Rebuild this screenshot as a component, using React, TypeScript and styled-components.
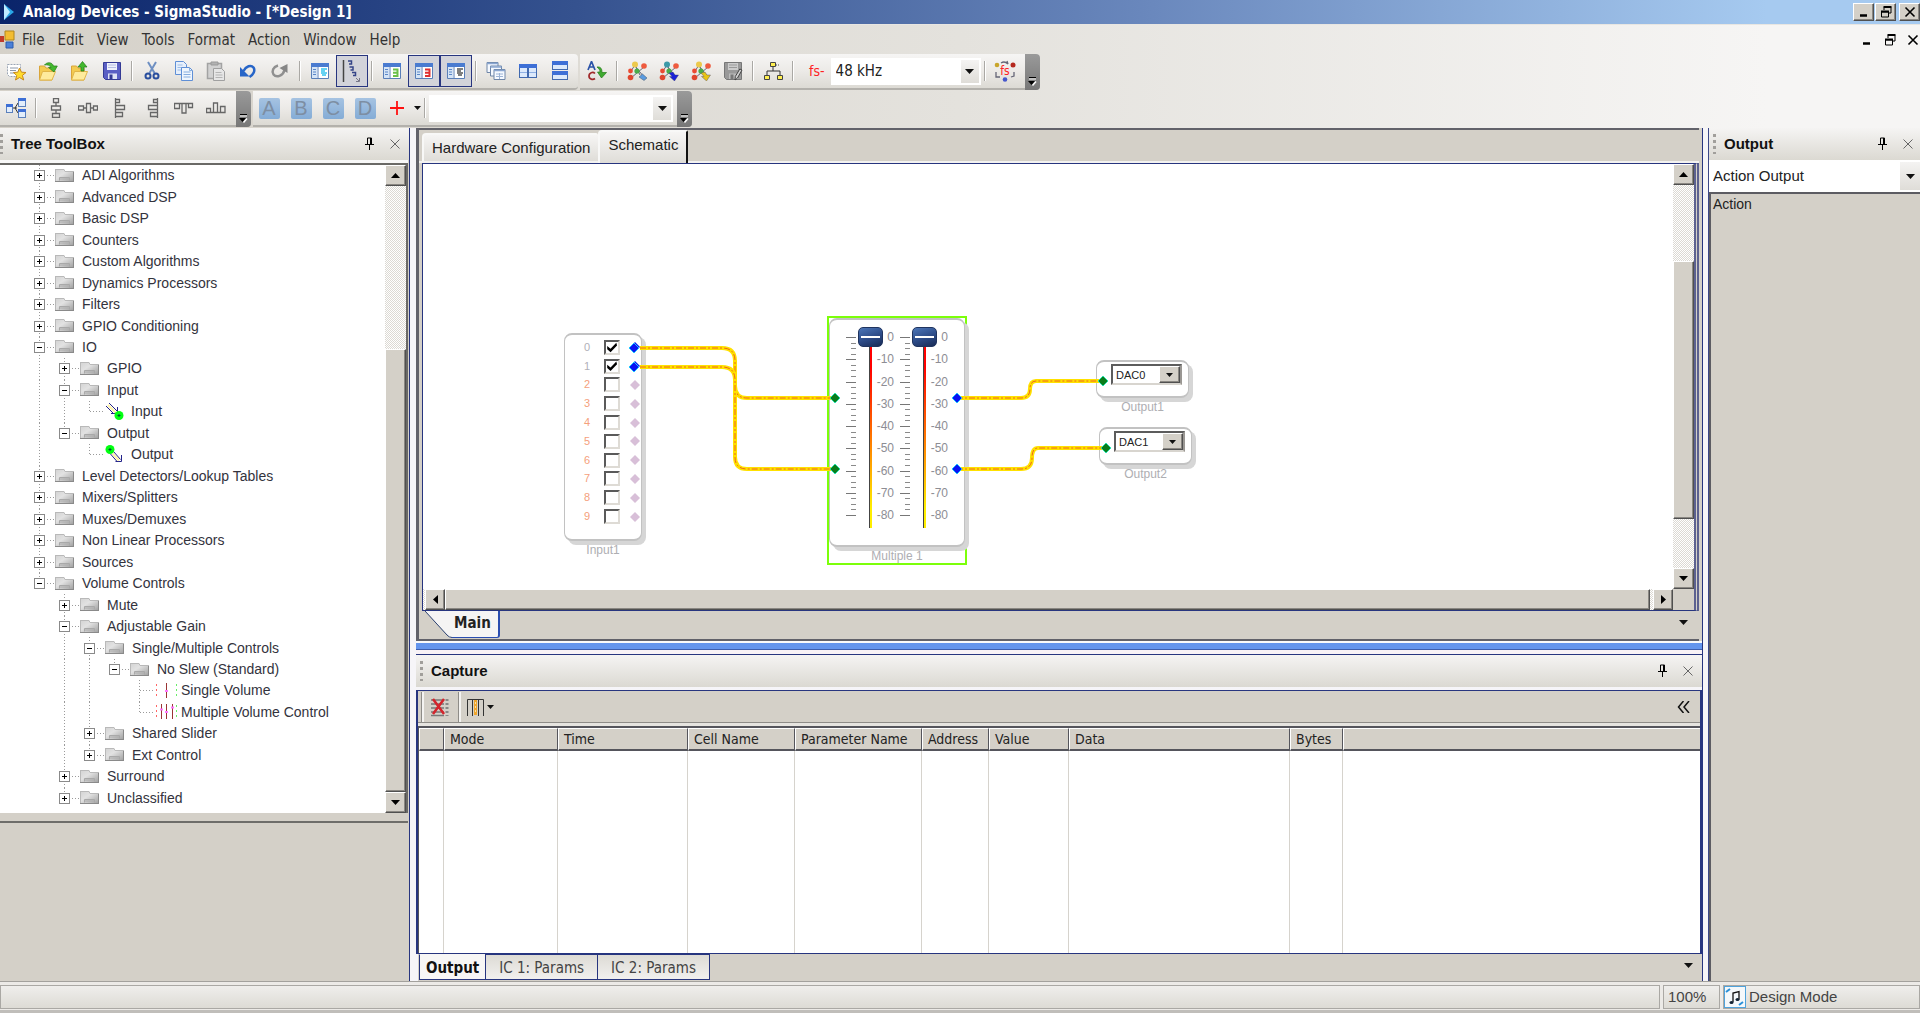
import React from "react";
import styled, { createGlobalStyle, css } from "styled-components";

const face = "#d4d0c8";
const navy = "#27357f";
const sans = '"Liberation Sans", Arial, sans-serif';
const tahoma = '"DejaVu Sans Condensed", "DejaVu Sans", Tahoma, sans-serif';

const GlobalStyle = createGlobalStyle`
  *, *::before, *::after { box-sizing: border-box; }
  body { margin: 0; background: ${face}; color: #222; font: 14px/20px ${sans}; overflow: hidden; }
  button, input, select { margin: 0; padding: 0; border: 0; border-radius: 0; background: none; color: inherit; font: inherit; }
  svg { display: block; flex: none; }
`;

const raised = css`
  background: ${face};
  border: 1px solid;
  border-color: #fff #505050 #505050 #fff;
  box-shadow: inset -1px -1px #8a8782;
`;
const strip = "linear-gradient(#f6f5f4, #eceae7 50%, #dcdad4)";

/* ---------- application frame ---------- */

const Window = styled.div`
  display: flex;
  flex-direction: column;
  height: 100vh;
  min-width: 1100px;
`;
const TitleBar = styled.header`
  display: flex;
  align-items: center;
  height: 24px;
  padding-left: 4px;
  background: linear-gradient(90deg, #0a246a, #35528f 30%, #6a88bd 60%, #a6caf0 92%);
`;
const AppName = styled.h1`
  flex: 1;
  margin: 0 0 0 9px;
  color: #fff;
  font: bold 15px/20px ${tahoma};
`;
const CaptionButtons = styled.div`
  display: flex;
`;
const CaptionButton = styled.button<{ $gap?: boolean }>`
  ${raised}
  display: grid;
  place-items: center;
  width: 21px;
  height: 18px;
  margin-left: ${(p) => (p.$gap ? 3 : 1)}px;
`;
const Chrome = styled.div`
  background: linear-gradient(90deg, #d5d1c9, #e4e2dd 50%, #f6f5f4 92%);
  border-top: 1px solid #e8e6e2;
`;
const MenuBar = styled.nav`
  display: flex;
  align-items: center;
  gap: 1px;
  height: 29px;
  font: 15px/20px ${tahoma};
`;
const MenuItem = styled.button`
  padding: 0 6px;
  color: #333;
`;
const MenuSpace = styled.div`
  flex: 1;
`;
const ChildButton = styled.button`
  display: grid;
  place-items: center;
  width: 22px;
  height: 20px;
  &:last-child {
    width: 14px;
    margin-left: 4px;
  }
`;
const ToolRow = styled.div`
  display: flex;
  gap: 2px;
  height: 37px;
  padding-bottom: 1px;
`;
const ToolStrip = styled.div<{ $open?: boolean; $pad?: number }>`
  display: flex;
  align-items: center;
  padding: 0 ${(p) => (p.$open ? 2 : 0)}px 0 ${(p) => p.$pad ?? 0}px;
  background: ${strip};
  border-bottom: 2px solid #b3b1ac;
  border-radius: 0 4px 4px 0;
`;
const ToolButton = styled.button<{ $on?: boolean }>`
  display: grid;
  place-items: center;
  width: 32px;
  height: 32px;
  border: 1px solid ${(p) => (p.$on ? navy : "transparent")};
  background: ${(p) => (p.$on ? "#d2d3da" : "transparent")};
`;
const Sep = styled.div`
  width: 8px;
  height: 20px;
  background: linear-gradient(90deg, transparent 3px, #aaa8a4 3px, #aaa8a4 4px, #fff 4px, #fff 5px, transparent 5px);
`;
const Overflow = styled.button`
  display: grid;
  place-items: end center;
  align-self: stretch;
  width: 15px;
  margin: 0 0 -2px 4px;
  padding-bottom: 4px;
  background: linear-gradient(#9a9a9a, #777);
  border-radius: 0 4px 4px 0;
`;
const Letter = styled.span`
  display: grid;
  place-items: center;
  width: 21px;
  height: 21px;
  border-radius: 2px;
  background: linear-gradient(#a6c3e2, #84acd6);
  color: #7d8ea3;
  font: 20px/21px ${sans};
`;
const RateLabel = styled.label`
  padding: 0 6px 0 12px;
  color: #f22;
  font: 14px/20px ${tahoma};
`;
const Combo = styled.span<{ $w?: number; $h: number }>`
  display: grid;
  grid-template-columns: 1fr 20px;
  align-items: center;
  width: ${(p) => (p.$w ? p.$w + "px" : "auto")};
  height: ${(p) => p.$h}px;
  background: #fff;
  > select {
    grid-area: 1 / 1 / 2 / 3;
    width: 100%;
    height: 100%;
    padding-left: 5px;
    appearance: none;
    outline: 0;
  }
  > i {
    grid-area: 1 / 2;
    display: grid;
    place-items: center;
    height: calc(100% - 4px);
    margin-right: 2px;
    background: linear-gradient(#f4f3f2, #dfddd8);
    pointer-events: none;
  }
`;
const RateCombo = styled(Combo)`
  font: 15px/20px ${tahoma};
`;

/* ---------- work area ---------- */

const Workspace = styled.main`
  flex: 1;
  display: grid;
  grid-template-columns: 409px 7px minmax(0, 1fr) 6px 212px;
  min-height: 0;
`;
const Gutter = styled.div`
  background: #f6f5f8;
  border-left: 1px solid ${navy};
`;
const Panel = styled.section`
  display: flex;
  flex-direction: column;
  min-width: 0;
  min-height: 0;
`;
const PanelHead = styled.header<{ $left?: number; $right?: number }>`
  display: flex;
  align-items: center;
  flex: none;
  height: 32px;
  padding: 0 ${(p) => p.$right ?? 2}px 1px ${(p) => p.$left ?? 4}px;
  background: linear-gradient(#f5f4f3, #dbd9d2);
`;
const Grip = styled.span`
  width: 3px;
  height: 20px;
  margin-right: 8px;
  background: repeating-linear-gradient(#a19f9b 0 3px, transparent 3px 6px);
`;
const PanelTitle = styled.h2`
  flex: 1;
  margin: 0;
  color: #111;
  font: bold 15px/20px ${sans};
`;
const HeadButton = styled.button`
  display: grid;
  place-items: center;
  width: 25px;
  height: 20px;
`;

/* ---------- tree ---------- */

const TreeBox = styled.div`
  flex: 1;
  display: flex;
  min-height: 0;
  margin-right: 1px;
  border-top: 3px solid #f8f8f8;
  background: #fff;
`;
const TreeInner = styled.div`
  flex: 1;
  display: flex;
  border: solid #6a6966;
  border-width: 2px 2px 0 0;
`;
const TreeList = styled.ul`
  flex: 1;
  display: flex;
  flex-direction: column;
  margin: 0;
  padding: 0 0 4px 27px;
  list-style: none;
`;
const TreeRow = styled.li`
  flex: 1;
  display: flex;
  align-items: stretch;
  min-height: 0;
  color: #33333d;
  white-space: nowrap;
`;
const vDots = "repeating-linear-gradient(#9a9a9a 0 1px, transparent 1px 3px)";
const hDots = "repeating-linear-gradient(90deg, #9a9a9a 0 1px, transparent 1px 3px)";
const Guide = styled.span<{ $line: "full" | "half" | "none" }>`
  width: 25px;
  background: ${(p) => (p.$line === "none" ? "none" : vDots)} 12px 0 / 1px ${(p) => (p.$line === "half" ? "50%" : "100%")} no-repeat;
`;
const Joint = styled(Guide)`
  display: grid;
  place-items: center;
`;
const Expander = styled.button`
  width: 11px;
  height: 11px;
  background: #fff;
  border: 1px solid #8a8a8a;
`;
const Stub = styled.span<{ $leaf?: boolean }>`
  align-self: center;
  width: ${(p) => (p.$leaf ? 14 : 7)}px;
  height: 1px;
  margin-left: ${(p) => (p.$leaf ? -12 : -5)}px;
  background: ${hDots};
`;
const NodeIcon = styled.span<{ $leaf?: boolean }>`
  display: grid;
  place-items: center start;
  width: ${(p) => (p.$leaf ? 23 : 19)}px;
  margin: 0 ${(p) => (p.$leaf ? 3 : 8)}px 1px 1px;
`;
const NodeName = styled.span`
  align-self: center;
  padding-bottom: 1px;
`;
const TreeFoot = styled.div`
  height: 160px;
  margin-top: 8px;
  margin-right: 1px;
  border-top: 2px solid #6e6d6a;
`;

/* ---------- scroll bars ---------- */

const Bar = styled.div<{ $h?: boolean }>`
  display: flex;
  flex-direction: ${(p) => (p.$h ? "row" : "column")};
  flex: none;
  ${(p) => (p.$h ? "height" : "width")}: 21px;
  padding-left: ${(p) => (p.$h ? 2 : 0)}px;
  background: repeating-conic-gradient(#fff 0 25%, #dcd9d3 0 50%) 0 0 / 2px 2px;
`;
const BarButton = styled.button`
  ${raised}
  display: grid;
  place-items: center;
  flex: none;
  min-width: 20px;
  height: 21px;
`;
const Gap = styled.div<{ $n: number }>`
  flex: ${(p) => p.$n};
`;
const Thumb = styled.div<{ $n: number }>`
  ${raised}
  flex: ${(p) => p.$n};
`;

/* ---------- editor ---------- */

const Editor = styled(Panel)`
  flex: 1;
  margin-right: 3px;
  background: ${face};
  border: solid #62626a;
  border-width: 2px 0 2px 3px;
`;
const TabStrip = styled.div`
  display: flex;
  align-items: flex-end;
  height: 33px;
  padding-left: 3px;
  border-bottom: 2px solid #f3f2f0;
`;
const Tab = styled.button<{ $on?: boolean }>`
  height: ${(p) => (p.$on ? 33 : 28)}px;
  margin-bottom: ${(p) => (p.$on ? -2 : 0)}px;
  padding: 0 8px ${(p) => (p.$on ? 6 : 0)}px 8px;
  background: linear-gradient(#f6f5f4, #dfddd8);
  border: solid #f8f8f7;
  border-width: 2px 0 0 2px;
  border-right: ${(p) => (p.$on ? "2px solid #111" : "0")};
  border-radius: 4px 2px 0 0;
  font: 15px/20px ${sans};
`;
const View = styled.div`
  flex: 1;
  display: grid;
  grid-template: minmax(0, 1fr) 21px / minmax(0, 1fr) 21px;
  min-height: 0;
  margin-left: 3px;
  border: 1px solid ${navy};
  border-right: 5px double #5c6190;
  background: ${face};
`;
const Canvas = styled.div`
  position: relative;
  overflow: hidden;
  background: #fff;
`;
const SheetStrip = styled.div`
  display: flex;
  align-items: flex-start;
  justify-content: space-between;
  height: 28px;
  padding: 0 8px 0 6px;
`;
const SheetTab = styled.button`
  display: flex;
  height: 27px;
  font: bold 15px/24px ${tahoma};
  > span {
    padding: 0 7px 0 2px;
    background: #f5f4f4;
    border: solid #2a4db0;
    border-width: 0 2px 1px 0;
    border-radius: 0 0 3px 0;
  }
`;
const MoreButton = styled.button<{ $slim?: boolean }>`
  display: grid;
  place-items: center;
  width: ${(p) => (p.$slim ? 8 : 15)}px;
  height: 22px;
`;
const Splitter = styled.div`
  flex: none;
  height: 14px;
  background: linear-gradient(#fafafa 0 2px, #6495ed 2px 8px, #3f5fae 8px 9px, #f8f2f6 9px 13px, ${navy} 13px);
`;

/* ---------- schematic blocks ---------- */

const Block = styled.div<{ $x: number; $y: number; $w: number }>`
  position: absolute;
  left: ${(p) => p.$x}px;
  top: ${(p) => p.$y}px;
  width: ${(p) => p.$w}px;
`;
const Body = styled.div<{ $h: number }>`
  display: flex;
  height: ${(p) => p.$h}px;
  background: #fff;
  border: 1px solid #c2c2c2;
  border-width: 2px 1px;
  border-radius: 8px;
  box-shadow: 4px 4px 0 #d6d6d6;
`;
const Caption = styled.div`
  margin-top: 2px;
  color: #aeaeb2;
  font: 12px/15px ${sans};
  text-align: center;
`;
const Selected = styled(Block)`
  height: 249px;
  border: 2px solid #7cff0a;
`;
const Channels = styled.div`
  display: flex;
  flex-direction: column;
  flex: 1;
  height: 188px;
  margin-top: 3px;
`;
const Channel = styled.label<{ $on: boolean }>`
  flex: 1;
  display: grid;
  grid-template-columns: 10px 16px 10px;
  column-gap: 10px;
  align-items: center;
  padding-left: 19px;
  color: ${(p) => (p.$on ? "#b0b0b8" : "#f5a07c")};
  font: 11px/15px ${sans};
`;
const Check = styled.input`
  appearance: none;
  width: 16px;
  height: 15px;
  background: #fff;
  border: 2px solid;
  border-color: #5a5a5a #dedbd5 #dedbd5 #5a5a5a;
  &:checked::before {
    content: "";
    display: block;
    width: 12px;
    height: 11px;
    background: #000;
    clip-path: polygon(10% 38%, 38% 62%, 86% 8%, 92% 32%, 38% 94%, 10% 66%);
  }
`;
const Faders = styled.div`
  display: flex;
  gap: 6px;
  padding: 7px 0 0 16px;
`;
const Fader = styled.div`
  display: grid;
  grid-template-columns: 10px 29px 9px;
  align-items: start;
`;
const Slide = styled.input`
  appearance: none;
  writing-mode: vertical-lr;
  direction: rtl;
  width: 25px;
  height: 201px;
  margin: 0 2px;
  outline: 0;
  &::-webkit-slider-runnable-track {
    width: 3px;
    height: 100%;
    background: linear-gradient(90deg, #444 1px, transparent 1px), linear-gradient(#f00 20%, #f60 50%, #fe0 90%);
  }
  &::-webkit-slider-thumb {
    appearance: none;
    width: 25px;
    height: 20px;
    margin-left: -11px;
    border-radius: 5px;
    border: 1px solid #20345f;
    background: linear-gradient(#fff, #fff) center / 19px 2px no-repeat, linear-gradient(160deg, #4c76b8, #2c4a86 55%, #182b55);
  }
`;
const Marks = styled.ol`
  display: flex;
  flex-direction: column;
  align-items: flex-end;
  justify-content: space-between;
  height: 194px;
  margin: 2px 0 0;
  padding: 0;
  list-style: none;
  color: #8d8d94;
  font: 12px/16px ${sans};
`;
const Scale = styled.svg`
  margin-top: 10px;
`;
const OutBody = styled(Body)`
  padding: 2px 0 0 14px;
`;
const DacCombo = styled(Combo)`
  grid-template-columns: 1fr 21px;
  border: 2px solid;
  border-color: #5c5c5c #9a9793 #d8d5cf #5c5c5c;
  font: 11px/14px ${sans};
  > select { padding-left: 3px; color: #222; }
  > i { ${raised} height: 100%; margin-right: 0; }
`;
const Overlay = styled.svg`
  position: absolute;
  left: 0;
  top: 0;
  pointer-events: none;
`;

/* ---------- capture ---------- */

const Capture = styled(Panel)`
  flex: none;
  height: 326px;
`;
const CaptureBody = styled.div`
  flex: 1;
  display: flex;
  flex-direction: column;
  min-height: 0;
  border: solid ${navy};
  border-width: 1px 2px;
`;
const HeadRule = styled.div`
  height: 3px;
  background: #f6f5f8;
`;
const CaptureTools = styled.div`
  display: flex;
  align-items: center;
  height: 35px;
  padding: 0 4px;
  border: solid;
  border-width: 0 0 3px;
  border-color: #e6e4e0;
  box-shadow: inset 0 -1px #8e8c88;
`;
const CaptureButton = styled.button`
  display: flex;
  align-items: center;
  gap: 2px;
  height: 30px;
  padding: 0 6px;
  border: solid;
  border-width: 0 0 0 2px;
  border-color: #f4f3f1;
  box-shadow: -1px 0 #8e8c88;
  margin-right: 3px;
`;
const Grid = styled.table`
  flex: 1;
  width: 100%;
  border: solid #55555c;
  border-width: 2px 0 0 1px;
  border-collapse: separate;
  border-spacing: 0;
  table-layout: fixed;
  background: #fff;
  font: 14px/19px ${tahoma};
  th {
    height: 23px;
    padding: 0 0 0 5px;
    background: ${face};
    border: solid;
    border-width: 1px 1px 2px 1px;
    border-color: #fff #55555c #55555c #fff;
    font-weight: normal;
    text-align: left;
    white-space: nowrap;
  }
  td { border-right: 1px solid #d6d3cd; }
  th:last-child, td:last-child { border-right: 0; }
`;
const BottomTabs = styled.div`
  display: flex;
  align-items: flex-start;
  height: 27px;
  padding: 0 6px 0 3px;
  box-shadow: inset 2px 0 #f6f5f8;
`;
const BottomTab = styled.button<{ $on?: boolean }>`
  height: 26px;
  margin-right: -1px;
  padding: 1px ${(p) => (p.$on ? 6 : 13)}px 0;
  background: ${(p) => (p.$on ? "#f7f6f5" : "linear-gradient(#dddbd5, #f1f0ee)")};
  border: 1px solid ${navy};
  border-top-color: ${(p) => (p.$on ? "#f7f6f5" : navy)};
  color: ${(p) => (p.$on ? "#111" : "#444")};
  font: ${(p) => (p.$on ? "bold " : "")}15px/20px ${tahoma};
`;

/* ---------- output and status ---------- */

const OutputPanel = styled(Panel)`
  border-left: 1px solid #3c4889;
`;
const OutputCombo = styled(Combo)`
  flex: none;
  font: 15px/20px ${sans};
  > select { padding-left: 4px; }
  > i { margin-right: 0; }
`;
const OutputList = styled.div`
  flex: 1;
  padding: 0 2px;
  border: solid #5c5c62;
  border-width: 2px 0 0 2px;
`;
const StatusBar = styled.footer`
  display: flex;
  flex: none;
  gap: 3px;
  height: 32px;
  padding: 3px 0 4px;
  background: #eceae7;
  border: solid #a3a19d;
  border-width: 1px 0 0;
  box-shadow: inset 0 -3px #c0beba;
  font: 15px/20px ${sans};
`;
const Pane = styled.div<{ $w?: number }>`
  display: flex;
  align-items: center;
  gap: 3px;
  flex: ${(p) => (p.$w ? "none" : 1)};
  width: ${(p) => (p.$w ? p.$w + "px" : "auto")};
  padding-left: 4px;
  background: linear-gradient(#efeeec, #dddbd5);
  border: 1px solid #aaa8a4;
  color: #444;
`;
const ModeIcon = styled.span`
  margin-left: -4px;
  background: #f4f8fb;
  border: 1px solid #4fa3dc;
`;

/* ---------- icons ---------- */

const Ico = ({ children, w = 20, h = 20 }: { children: React.ReactNode; w?: number; h?: number }) => (
  <svg width={w} height={h} viewBox={`0 0 ${w} ${h}`} fill="none" aria-hidden="true">
    {children}
  </svg>
);
const Down = ({ c = "#111" }: { c?: string }) => (
  <Ico w={9} h={5}><path d="M0 0h9L4.500 5z" fill={c} /></Ico>
);
const Small = () => <Ico w={7} h={4}><path d="M0 0h7L3.500 4z" fill="#111" /></Ico>;
const Arrow = ({ dir }: { dir: "up" | "down" | "left" | "right" }) => (
  <Ico w={9} h={9}>
    <path
      fill="#000"
      d={{ up: "M0 7h9L4.500 2z", down: "M0 2h9L4.500 7z", left: "M7 0v9L2 4.500z", right: "M2 0v9l5-4.500z" }[dir]}
    />
  </Ico>
);
const Minimize = () => <Ico w={14} h={14}><path d="M3 10.500h7" stroke="#000" strokeWidth="2.500" /></Ico>;
const Restore = () => (
  <Ico w={14} h={14}>
    <path d="M5 5V2.500h7V8h-2" stroke="#000" /><path d="M4.500 2h8" stroke="#000" strokeWidth="2" />
    <path d="M2.500 7v5h7V7z" stroke="#000" /><path d="M2 6.500h8" stroke="#000" strokeWidth="2" />
  </Ico>
);
const Cross = ({ thin }: { thin?: boolean }) => (
  <Ico w={12} h={12}><path d="M1.500 1.500l9 9M10.500 1.500l-9 9" stroke={thin ? "#666" : "#000"} strokeWidth={thin ? 1 : 1.6} /></Ico>
);
const Pin = () => (
  <Ico w={11} h={13}>
    <path d="M3.500 1h4v6.500h-4zM1 7.500h9M5.500 8v5" stroke="#000" /><path d="M7 1v6" stroke="#000" strokeWidth="2" />
  </Ico>
);
const OverflowMark = () => (
  <Ico w={9} h={10}>
    <path d="M1 1.500h7" stroke="#000" /><path d="M1 3h7" stroke="#fff" />
    <path d="M0 5h7L3.500 9z" fill="#000" /><path d="M8 5.500L4.500 9.500" stroke="#fff" strokeWidth="1.500" />
  </Ico>
);
const Folder = () => (
  <Ico w={19} h={15}>
    <defs>
      <linearGradient id="fold" x1="0" y1="0" x2="1" y2="1">
        <stop offset="0" stopColor="#d2d2d2" /><stop offset=".4" stopColor="#e2e2e2" /><stop offset="1" stopColor="#9c9c9c" />
      </linearGradient>
    </defs>
    <path d="M0 1h9l1 2h9v11H0z" fill="url(#fold)" />
    <path d="M0 1.500h9l1 2h9M.500 1v13" stroke="#b9b9b9" /><path d="M0 13.500h19M18.500 4v10" stroke="#8a8a8a" />
    <path d="M4.500 12.500v-3h10v3M5 11h9" stroke="#a9a9a9" />
  </Ico>
);
const Pencil = ({ out }: { out?: boolean }) => (
  <Ico w={19} h={18}>
    {out ? (
      <>
        <path d="M8.500 6.500l7 8M5.500 9l7 8M10.500 16.500h6V10" stroke="#23238a" /><path d="M7.500 8.500l6.500 7" stroke="#fff3a8" strokeWidth="2" />
        <circle cx="5" cy="4.500" r="4.500" fill="#0f1" /><path d="M5 3v3M3.500 4.500h3" stroke="#053" />
      </>
    ) : (
      <>
        <path d="M4 1l8 8M1 4l8 8M6 11.500h6.500V5" stroke="#23238a" /><path d="M3 3l8 8" stroke="#fff3a8" strokeWidth="2" />
        <circle cx="14" cy="13.500" r="4.500" fill="#0f1" /><path d="M14 12v3M12.500 13.500h3" stroke="#053" />
      </>
    )}
  </Ico>
);
const Volume = ({ multi }: { multi?: boolean }) => (
  <Ico w={23} h={17}>
    <path d="M1.500 2v14" stroke="#f66" strokeDasharray="2 3" /><path d="M21.500 2v14" stroke="#6e6" strokeDasharray="2 3" />
    <path d={multi ? "M6.500 1v15M11.500 1v15M17.500 1v15" : "M11.500 1v15"} stroke="#9a3434" />
    {multi && <path d="M5 6.500h3M16 4.500h3" stroke="#f7f" strokeWidth="2" />}
    <path d="M10 9h3" stroke="#f7f" strokeWidth="2" />
  </Ico>
);
const NewIcon = () => (
  <Ico>
    <path d="M1.500 3.500h13v12h-11l-2-2z" fill="#fff" stroke="#9ba5b5" strokeDasharray="2 1" />
    <path d="M4 7h8M4 9.500h6M4 12h4" stroke="#8c97aa" />
    <path d="M13.500 7l2 4.200 4.500.3-3.600 2.900 1.300 4.600-4.200-2.500L9.500 19l1.200-4.500L7.500 11.500l4.300-.3z" fill="#ffdb2e" stroke="#c9881a" />
  </Ico>
);
const OpenIcon = ({ up }: { up?: boolean }) => (
  <Ico>
    <path d="M1.500 5h5l1.500 2h6v12H1.500z" fill="#f3cb50" stroke="#d9a53a" />
    <path d="M4.500 10.500h13L14 19H1.500z" fill="#feeb9c" stroke="#e0b548" />
    {up ? <path d="M11 10V6H8l4.500-5.500L17 6h-3v4z" fill="#43b82e" stroke="#227a18" strokeWidth=".7" />
      : <path d="M6.500 4C9 .8 14 .8 15.500 5h3.800l-3.300 6-5.500-4.500h2.500C12 4 9 3.500 6.500 4z" fill="#43b82e" stroke="#227a18" strokeWidth=".7" />}
  </Ico>
);
const SaveIcon = ({ pen }: { pen?: boolean }) => {
  const a = pen ? "#999" : "#5a5fc4";
  const b = pen ? "#777" : "#343a94";
  return (
    <Ico>
      <path d="M1.500 1.500h17v17h-15l-2-2z" fill={a} stroke={b} />
      <path d="M5 2h10v7H5z" fill={pen ? "#ccc" : "#eef1fb"} /><path d="M6 4h8M6 6.500h8" stroke={pen ? "#999" : "#b5bde4"} />
      <path d="M6 12.500h9V18H6z" fill={pen ? "#bbb" : "#dfe3f5"} /><path d="M7.500 13.500h3V18h-3z" fill={b} />
      {pen && <path d="M19 9l-4.500 8-2.500 2 .3-3.500 4.500-7.500z" fill="#d0d0d0" stroke="#444" />}
    </Ico>
  );
};
const CutIcon = () => (
  <Ico>
    <path d="M6 1l6.500 11M14 1L7.500 12" stroke="#6e8fc2" strokeWidth="2" />
    <circle cx="6" cy="15" r="2.500" stroke="#2a4f9e" strokeWidth="2" /><circle cx="14" cy="15" r="2.500" stroke="#2a4f9e" strokeWidth="2" />
  </Ico>
);
const CopyIcon = () => (
  <Ico>
    <path d="M1.500.500h8l3 3v10h-11z" fill="#e6effb" stroke="#5f8fd6" /><path d="M3.500 4h5M3.500 6.500h5M3.500 9h5" stroke="#9dbde8" />
    <path d="M7.500 6.500h8l3 3v10h-11z" fill="#eef5fd" stroke="#5f8fd6" /><path d="M15.500 6.500v3h3M9.500 11h7M9.500 13.500h7M9.500 16h7" stroke="#86addf" />
  </Ico>
);
const PasteIcon = () => (
  <Ico>
    <path d="M1.500 2.500h14v15h-14z" fill="#d2d2d2" stroke="#a3a3a3" strokeWidth="1.500" /><path d="M5 1h7v3H5z" fill="#b2b2b2" stroke="#999" />
    <path d="M7.500 7.500h8l3 3v9h-11z" fill="#e6e6e6" stroke="#a0a0a0" /><path d="M9.500 11.500h6M9.500 14h7M9.500 16.500h7" stroke="#b4b4b4" />
  </Ico>
);
const UndoIcon = () => (
  <Ico>
    <path d="M5.500 10C8 5 13 3.500 15.500 6.500c2 3 0 7-4 9.500" stroke="#2765c8" strokeWidth="2.500" /><path d="M2 6v9.500h9.500z" fill="#2765c8" />
  </Ico>
);
const RedoIcon = () => (
  <Ico>
    <path d="M8 4.500C3 6 1.500 10 3.500 13.500c3 3.500 9.500 1.500 11-4.500" stroke="#909090" strokeWidth="2.500" /><path d="M17.500 3v9L9.500 7z" fill="#868686" />
  </Ico>
);
const PaneIcon = ({ c, k = 0 }: { c: string; k?: number }) => (
  <Ico>
    <path d="M1.500 2.500h17v15h-17z" fill="#fff" stroke="#5a7fb8" /><path d="M1 2h18v4H1z" fill="#4a7bd0" />
    <path d="M2 6h5v11H2z" fill="#d5e4f6" /><path d="M3 8.500h3M3 11h3M3 13.500h3" stroke="#5a86c8" />
    <path d="M8 6v12" stroke="#5a7fb8" />
    {k === 0 ? <path d="M11 8h6M11 10h4M11 12h6M12 14h4" stroke={c} strokeWidth="1.500" />
      : <path d="M11 8.500h4.500v6.500H11M11 11.800h4.500" stroke={c} strokeWidth="2" />}
  </Ico>
);
const TreeIcon = () => (
  <Ico w={22} h={24}>
    <path d="M2.500 1v22" stroke="#444" strokeWidth="1.500" />
    <path d="M7 2h3.500v3H8M8.500 8H12v3H9.500M11 13.500h3.500v3H12" stroke="#344488" strokeWidth="1.500" /><path d="M15 19l3 3M18.500 19v3.500H15" stroke="#778" />
  </Ico>
);
const CascadeIcon = () => (
  <Ico>
    {[0, 3.5, 7].map((d) => (
      <g key={d}>
        <path d={`M${1 + d} ${1.5 + d}h11v10h-11z`} fill="#f5f9ff" stroke="#6f86a8" /><path d={`M${1 + d} ${2.5 + d}h11`} stroke="#8aa6d0" strokeWidth="1.500" />
      </g>
    ))}
    <path d="M10 13h7M10 15.500h7M13.500 12v6" stroke="#9db4d6" />
  </Ico>
);
const TileIcon = ({ rows }: { rows?: boolean }) => (
  <Ico>
    {(rows ? [[2, 0, 16, 9], [2, 10, 16, 9]] : [[1, 3, 9, 14], [10, 3, 9, 14]]).map(([x, y, w, h]) => (
      <g key={x + y}>
        <rect x={x + 0.5} y={y + 0.5} width={w - 1} height={h - 1} fill="#dce9fb" stroke="#4169ae" /><rect x={x} y={y} width={w} height="4" fill="#3d6fd6" />
        {!rows && <path d={`M${x + 1} ${y + 8.5}h${w - 2}`} stroke="#8fb0e4" />}
      </g>
    ))}
  </Ico>
);
const CheckIcon = () => (
  <Ico>
    <path d="M1 9L4.500.500 8 9M2.500 6h4" stroke="#2a52a8" strokeWidth="1.700" /><path d="M8 12.500c-2-2-6-1-6 2.500s4 4 6 2.500" stroke="#a0282a" strokeWidth="1.700" />
    <path d="M10 6c4-.5 5 2 5 5.500h4.500l-5 5.500-4-6h2.500c0-2-1-3.500-3-5z" fill="#3faa30" stroke="#227a18" strokeWidth=".7" />
  </Ico>
);
const LinkIcon = ({ top, tip, k }: { top: string; tip: string; k?: boolean }) => (
  <Ico>
    <path d="M8 4L4 10M8 4l5 10M17 6L4 17M8 5l9 11" stroke="#667" />
    <circle cx="8" cy="3.500" r="3" fill={top} /><circle cx="17" cy="5" r="2.800" fill="#ee5a3e" /><circle cx="3.500" cy="10" r="2.400" fill="#ea4b32" />
    <circle cx="10" cy="10" r="2.600" fill="#49ad49" /><circle cx="3.500" cy="16.500" r="2.800" fill="#e0462e" />
    {k ? <path d="M10 12l4-1 2 3h3.500l-4 6-5-4.500h2.500z" fill={tip} stroke="#446" strokeWidth=".4" /> : <path d="M12 16l5 3.500 3-2.500-4.500-4z" fill={tip} stroke="#456" strokeWidth=".5" />}
  </Ico>
);
const NetIcon = () => (
  <Ico>
    <path d="M10 6v4M4 14v-4h13v4" stroke="#333" /><path d="M7.500 1.500h5v4h-5zM1.500 14.500h5v4h-5zM14.500 14.500h5v4h-5z" fill="#ffef50" stroke="#444" />
    <path d="M13 4h4" stroke="#555" strokeDasharray="1 1" />
  </Ico>
);
const SyncIcon = () => (
  <Ico w={22} h={22}>
    <circle cx="3" cy="5" r="2.300" fill="#c9a62c" /><circle cx="19" cy="5" r="2.500" fill="#b5281e" /><circle cx="11" cy="19.500" r="2.300" fill="#4657cc" />
    <path d="M7 3c3-2 5-1 7 1l-1-3M2 12v5h4M20 12v4l-3 1" stroke="#667" strokeWidth="1.300" />
    <text x="11" y="15" fill="#f22" fontSize="12" textAnchor="middle" fontFamily="DejaVu Sans Condensed">fs</text>
  </Ico>
);
const LinksIcon = () => (
  <Ico>
    <path d="M7 10h4M12 5l-3 5 3 5" stroke="#333" />
    {[[0, 6, 7], [12, 0, 8], [12, 11, 8]].map(([x, y, w]) => (
      <g key={y}><rect x={x + 0.5} y={y + 0.5} width={w - 1} height="8" fill="#e2edfb" stroke="#5b80bc" /><rect x={x} y={y} width={w} height="3" fill="#3d6fd6" /></g>
    ))}
  </Ico>
);
const alignPaths = [
  "M7.500.500h5v4h-5zM5.500 8h9v4h-9zM6.500 15.500h7v4h-7zM10 4.500V8M10 12v3.500",
  "M.500 8h5v4h-5zM8.500 5.500h4v9h-4zM15.500 8h4v4h-4zM5.500 10h3M12.500 10h3",
  "M5.500 0v20M5.500 1.500h4v3h-4zM5.500 7.500h9v4h-9zM5.500 14.500h7v4h-7z",
  "M15.500 0v20M11.500 1.500h4v3h-4zM6.500 7.500h9v4h-9zM8.500 14.500h7v4h-7z",
  "M.500 5.500h5v5h-5zM5.500 5.500h9M8 5.500h4v9.500h-4zM14.500 5.500h4v4h-4z",
  "M.500 10.500h4v4h-4zM4.500 14.500h10M7.500 5h4v9.500h-4zM14.500 8.500h4.500v6h-4.500z",
];
const AlignIcon = ({ n }: { n: number }) => <Ico><path d={alignPaths[n]} stroke="#666" strokeWidth="1.300" /></Ico>;
const PlusIcon = () => <Ico w={14} h={14}><path d="M7 0v14M0 7h14" stroke="#f11" strokeWidth="1.800" /></Ico>;
const ClearIcon = () => (
  <Ico>
    <path d="M1 3h13M1 7h13M1 11h13M1 15h13M1 18.500h13" stroke="#777" strokeWidth="1.500" /><path d="M17 2v17" stroke="#888" strokeWidth="3" strokeDasharray="2 2" />
    <path d="M3 2l11 15M14 2L3 17" stroke="#d4242c" strokeWidth="2.500" />
  </Ico>
);
const ColumnsIcon = () => (
  <Ico w={18} h={18}>
    <path d="M.500 18V1.500h16V18M5.500 1v17M11.500 1v17" stroke="#333" /><path d="M7 2h3v15H7z" fill="#f0a52c" /><path d="M8.500 4v12" stroke="#fbe0a0" strokeDasharray="2 2" />
  </Ico>
);
const NotesIcon = () => (
  <Ico>
    <path d="M8 15V6l6-1.500v8" stroke="#111" strokeWidth="1.300" /><ellipse cx="6.500" cy="15.500" rx="2" ry="1.600" fill="#123" /><ellipse cx="12.500" cy="12.500" rx="2" ry="1.600" fill="#123" />
    <path d="M1 5l4-3M14 18l4-3" stroke="#2a90d8" strokeWidth="2" />
  </Ico>
);
const AppMark = () => (
  <Ico w={10} h={16}><path d="M0 0l10 8-10 8z" fill="#2aa7e8" /><path d="M0 0l6 8-6 8z" fill="#bfeaff" /></Ico>
);
const ChildMark = () => (
  <Ico w={15} h={20}>
    <path d="M5 1h9v9H5z" fill="#f3bd33" stroke="#b3861c" /><path d="M0 6h4v6H0z" fill="#c23a2a" /><path d="M6 12h7v6H6z" fill="#4b80d8" stroke="#2c5cae" />
  </Ico>
);

/* ---------- data ---------- */

type Item = { d: number; t: string; k?: "+" | "-"; icon?: React.ReactNode; up?: number[]; last?: boolean };
const tree: Item[] = [
  ...["ADI Algorithms", "Advanced DSP", "Basic DSP", "Counters", "Custom Algorithms", "Dynamics Processors", "Filters", "GPIO Conditioning"]
    .map((t): Item => ({ d: 0, t, k: "+" })),
  { d: 0, t: "IO", k: "-" },
  { d: 1, t: "GPIO", k: "+", up: [0] },
  { d: 1, t: "Input", k: "-", up: [0] },
  { d: 2, t: "Input", icon: <Pencil />, up: [0, 1], last: true },
  { d: 1, t: "Output", k: "-", up: [0], last: true },
  { d: 2, t: "Output", icon: <Pencil out />, up: [0], last: true },
  ...["Level Detectors/Lookup Tables", "Mixers/Splitters", "Muxes/Demuxes", "Non Linear Processors", "Sources"]
    .map((t): Item => ({ d: 0, t, k: "+" })),
  { d: 0, t: "Volume Controls", k: "-", last: true },
  { d: 1, t: "Mute", k: "+" },
  { d: 1, t: "Adjustable Gain", k: "-" },
  { d: 2, t: "Single/Multiple Controls", k: "-", up: [1] },
  { d: 3, t: "No Slew (Standard)", k: "-", up: [1, 2], last: true },
  { d: 4, t: "Single Volume", icon: <Volume />, up: [1, 2] },
  { d: 4, t: "Multiple Volume Control", icon: <Volume multi />, up: [1, 2], last: true },
  { d: 2, t: "Shared Slider", k: "+", up: [1] },
  { d: 2, t: "Ext Control", k: "+", up: [1], last: true },
  { d: 1, t: "Surround", k: "+" },
  { d: 1, t: "Unclassified", k: "+", last: true },
];
const columns: [string, number?][] = [
  ["", 25], ["Mode", 114], ["Time", 130], ["Cell Name", 107], ["Parameter Name", 127],
  ["Address", 67], ["Value", 80], ["Data", 221], ["Bytes", 53], [""],
];
const marks = ["0", "-10", "-20", "-30", "-40", "-50", "-60", "-70", "-80"];
const wires = [
  "M217 184H299Q312 184 312 197V222Q312 234 324 234H412",
  "M217 203H299Q312 203 312 216V293Q312 305 324 305H412",
  "M534 234H598Q607 234 607 225Q607 217 613 217H680",
  "M534 305H598Q609 305 609 294Q609 284 615 284H683",
];
const ports: [number, number, string][] = [
  [412, 234, "g"], [412, 305, "g"], [534, 234, "b"], [534, 305, "b"],
  [680, 217, "g"], [683, 284, "g"], [211, 184, "b"], [211, 203, "b"],
];
const portColor: Record<string, [string, string]> = { g: ["#0a7d1a", "#28e0b0"], b: ["#0a12f4", "#20c4ff"] };

const TreeItem = ({ item }: { item: Item }) => (
  <TreeRow>
    {Array.from({ length: item.d }, (_, i) => <Guide key={i} $line={item.up?.includes(i) ? "full" : "none"} />)}
    <Joint $line={item.last ? "half" : "full"}>
      {item.k && (
        <Expander aria-label={(item.k === "+" ? "Expand " : "Collapse ") + item.t}>
          <Ico w={9} h={9}><path d={item.k === "+" ? "M2 4.500h5M4.500 2v5" : "M2 4.500h5"} stroke="#000" /></Ico>
        </Expander>
      )}
    </Joint>
    <Stub $leaf={!item.k} />
    <NodeIcon $leaf={!item.k}>{item.icon ?? <Folder />}</NodeIcon>
    <NodeName>{item.t}</NodeName>
  </TreeRow>
);

const HeadTools = () => (
  <>
    <HeadButton aria-label="Auto hide"><Pin /></HeadButton>
    <HeadButton aria-label="Close panel"><Cross thin /></HeadButton>
  </>
);

const FaderStrip = ({ name }: { name: string }) => (
  <Fader>
    <Scale width="10" height="180" viewBox="0 0 10 180" aria-hidden="true">
      {Array.from({ length: 33 }, (_, i) => {
        const y = Math.round((i * 178) / 32) + 0.5;
        return <path key={i} d={`M${i % 4 ? 5 : 0} ${y}H10`} stroke={i % 4 ? "#8a8a8a" : "#777"} />;
      })}
    </Scale>
    <Slide type="range" min={-80} max={0} defaultValue={0} aria-label={name} />
    <Marks>{marks.map((m) => <li key={m}>{m}</li>)}</Marks>
  </Fader>
);

const OutputBlock = ({ x, y, dac, name }: { x: number; y: number; dac: string; name: string }) => (
  <Block $x={x} $y={y} $w={93}>
    <OutBody $h={38}>
      <DacCombo $w={71} $h={21}>
        <select aria-label={name} defaultValue={dac}><option>{dac}</option></select>
        <i><Small /></i>
      </DacCombo>
    </OutBody>
    <Caption>{name}</Caption>
  </Block>
);

export default function App() {
  return (
    <Window>
      <GlobalStyle />
      <TitleBar>
        <AppMark />
        <AppName>Analog Devices - SigmaStudio - [*Design 1]</AppName>
        <CaptionButtons>
          <CaptionButton aria-label="Minimize"><Minimize /></CaptionButton>
          <CaptionButton aria-label="Restore"><Restore /></CaptionButton>
          <CaptionButton aria-label="Close" $gap><Cross /></CaptionButton>
        </CaptionButtons>
      </TitleBar>
      <Chrome>
        <MenuBar>
          <ChildMark />
          {["File", "Edit", "View", "Tools", "Format", "Action", "Window", "Help"].map((m) => <MenuItem key={m}>{m}</MenuItem>)}
          <MenuSpace />
          <ChildButton aria-label="Minimize design"><Minimize /></ChildButton>
          <ChildButton aria-label="Restore design"><Restore /></ChildButton>
          <ChildButton aria-label="Close design"><Cross /></ChildButton>
        </MenuBar>
        <ToolRow>
          <ToolStrip $open>
            <ToolButton aria-label="New"><NewIcon /></ToolButton>
            <ToolButton aria-label="Open"><OpenIcon /></ToolButton>
            <ToolButton aria-label="Open recent"><OpenIcon up /></ToolButton>
            <ToolButton aria-label="Save"><SaveIcon /></ToolButton>
            <Sep />
            <ToolButton aria-label="Cut"><CutIcon /></ToolButton>
            <ToolButton aria-label="Copy"><CopyIcon /></ToolButton>
            <ToolButton aria-label="Paste"><PasteIcon /></ToolButton>
            <ToolButton aria-label="Undo"><UndoIcon /></ToolButton>
            <ToolButton aria-label="Redo"><RedoIcon /></ToolButton>
            <Sep />
            <ToolButton aria-label="Properties"><PaneIcon c="#35c4ee" /></ToolButton>
            <ToolButton aria-label="Tree toolbox" $on><TreeIcon /></ToolButton>
            <Sep />
            <ToolButton aria-label="Watch"><PaneIcon c="#6cc04a" k={1} /></ToolButton>
            <ToolButton aria-label="Output" $on><PaneIcon c="#e03030" k={1} /></ToolButton>
            <ToolButton aria-label="Capture" $on><PaneIcon c="#555" /></ToolButton>
            <Sep />
            <ToolButton aria-label="Cascade"><CascadeIcon /></ToolButton>
            <ToolButton aria-label="Tile columns"><TileIcon /></ToolButton>
            <ToolButton aria-label="Tile rows"><TileIcon rows /></ToolButton>
          </ToolStrip>
          <ToolStrip $pad={1}>
            <ToolButton aria-label="Check"><CheckIcon /></ToolButton>
            <Sep />
            <ToolButton aria-label="Link"><LinkIcon top="#ecc94c" tip="#5a9be0" /></ToolButton>
            <ToolButton aria-label="Link compile connect"><LinkIcon top="#3c9aa8" tip="#1a22d8" k /></ToolButton>
            <ToolButton aria-label="Link compile download"><LinkIcon top="#ecc94c" tip="#e8c414" k /></ToolButton>
            <ToolButton aria-label="Export"><SaveIcon pen /></ToolButton>
            <Sep />
            <ToolButton aria-label="Network"><NetIcon /></ToolButton>
            <Sep />
            <RateLabel htmlFor="rate">fs-</RateLabel>
            <RateCombo $w={150} $h={27}>
              <select id="rate" defaultValue="48 kHz"><option>48 kHz</option></select>
              <i><Down /></i>
            </RateCombo>
            <Sep />
            <ToolButton aria-label="Apply rate"><SyncIcon /></ToolButton>
            <Overflow aria-label="More tools"><OverflowMark /></Overflow>
          </ToolStrip>
        </ToolRow>
        <ToolRow>
          <ToolStrip>
            <ToolButton aria-label="Link blocks"><LinksIcon /></ToolButton>
            <Sep />
            {["Centres", "Middles", "Lefts", "Rights", "Tops", "Bottoms"].map((n, i) => (
              <ToolButton key={n} aria-label={"Align " + n}><AlignIcon n={i} /></ToolButton>
            ))}
            <Overflow aria-label="More alignment"><OverflowMark /></Overflow>
          </ToolStrip>
          <ToolStrip>
            {["A", "B", "C", "D"].map((l) => <ToolButton key={l}><Letter>{l}</Letter></ToolButton>)}
            <ToolButton aria-label="Add"><PlusIcon /></ToolButton>
            <MoreButton aria-label="Add options" $slim><Small /></MoreButton>
            <Sep />
            <Combo $w={244} $h={27}>
              <select aria-label="Preset" defaultValue=""><option value=""></option></select>
              <i><Down /></i>
            </Combo>
            <Overflow aria-label="More presets"><OverflowMark /></Overflow>
          </ToolStrip>
        </ToolRow>
      </Chrome>
      <Workspace>
        <Panel>
          <PanelHead $left={0}>
            <Grip /><PanelTitle>Tree ToolBox</PanelTitle><HeadTools />
          </PanelHead>
          <TreeBox>
            <TreeInner>
              <TreeList>{tree.map((n, i) => <TreeItem key={i} item={n} />)}</TreeList>
              <Bar>
                <BarButton aria-label="Scroll up"><Arrow dir="up" /></BarButton>
                <Gap $n={163} /><Thumb $n={441} />
                <BarButton aria-label="Scroll down"><Arrow dir="down" /></BarButton>
              </Bar>
            </TreeInner>
          </TreeBox>
          <TreeFoot />
        </Panel>
        <Gutter />
        <Panel>
          <Editor>
            <TabStrip>
              <Tab>Hardware Configuration</Tab>
              <Tab $on>Schematic</Tab>
            </TabStrip>
            <View>
              <Canvas>
                <Block $x={141} $y={169} $w={78}>
                  <Body $h={208}>
                    <Channels>
                      {Array.from({ length: 10 }, (_, i) => (
                        <Channel key={i} $on={i < 2}>
                          {i}
                          <Check type="checkbox" defaultChecked={i < 2} />
                          <Ico w={10} h={10}><path d="M5 0l5 5-5 5-5-5z" fill={i < 2 ? "#0a12f4" : "#d8bfd8"} /></Ico>
                        </Channel>
                      ))}
                    </Channels>
                  </Body>
                  <Caption>Input1</Caption>
                </Block>
                <Selected $x={404} $y={152} $w={140}>
                  <Body $h={229}>
                    <Faders><FaderStrip name="Fader 1" /><FaderStrip name="Fader 2" /></Faders>
                  </Body>
                  <Caption>Multiple 1</Caption>
                </Selected>
                <OutputBlock x={673} y={196} dac="DAC0" name="Output1" />
                <OutputBlock x={676} y={263} dac="DAC1" name="Output2" />
                <Overlay width="800" height="400" fill="none" aria-hidden="true">
                  {wires.map((d) => (
                    <g key={d}>
                      <path d={d} stroke="#ffe100" strokeWidth="4" />
                      <path d={d} stroke="#f0641e" strokeDasharray="6 2 2 2" />
                    </g>
                  ))}
                  {ports.map(([x, y, k]) => (
                    <path key={x + "," + y} d={`M${x} ${y - 5}l5 5-5 5-5-5z`} fill={portColor[k][0]} stroke={portColor[k][1]} />
                  ))}
                </Overlay>
              </Canvas>
              <Bar>
                <BarButton aria-label="Scroll up"><Arrow dir="up" /></BarButton>
                <Gap $n={76} /><Thumb $n={256} /><Gap $n={49} />
                <BarButton aria-label="Scroll down"><Arrow dir="down" /></BarButton>
              </Bar>
              <Bar $h>
                <BarButton aria-label="Scroll left"><Arrow dir="left" /></BarButton>
                <Thumb $n={400} /><Gap $n={1} />
                <BarButton aria-label="Scroll right"><Arrow dir="right" /></BarButton>
              </Bar>
            </View>
            <SheetStrip>
              <SheetTab>
                <Ico w={27} h={27}><path d="M0 0h27v27h-2z" fill="#f5f4f4" /><path d="M0 0l22 24q2 2.500 5 2.500" stroke="#2a4070" /></Ico>
                <span>Main</span>
              </SheetTab>
              <MoreButton aria-label="Sheets"><Down /></MoreButton>
            </SheetStrip>
          </Editor>
          <Splitter />
          <Capture>
            <PanelHead>
              <Grip /><PanelTitle>Capture</PanelTitle><HeadTools />
            </PanelHead>
            <HeadRule />
            <CaptureBody>
              <CaptureTools>
                <CaptureButton aria-label="Clear capture"><ClearIcon /></CaptureButton>
                <CaptureButton aria-label="Columns"><ColumnsIcon /><Small /></CaptureButton>
                <MenuSpace />
                <HeadButton aria-label="Collapse">
                  <Ico w={13} h={12}><path d="M6.500 0L1.500 6l5 6M12 0L7 6l5 6" stroke="#111" strokeWidth="1.500" /></Ico>
                </HeadButton>
              </CaptureTools>
              <Grid as="table">
                <colgroup>{columns.map(([, w], i) => <col key={i} width={w} />)}</colgroup>
                <thead><tr>{columns.map(([t], i) => <th key={i}>{t}</th>)}</tr></thead>
                <tbody><tr>{columns.map((_, i) => <td key={i} />)}</tr></tbody>
              </Grid>
            </CaptureBody>
            <BottomTabs>
              <BottomTab $on>Output</BottomTab>
              <BottomTab>IC 1: Params</BottomTab>
              <BottomTab>IC 2: Params</BottomTab>
              <MenuSpace />
              <MoreButton aria-label="Capture tabs"><Down /></MoreButton>
            </BottomTabs>
          </Capture>
        </Panel>
        <Gutter />
        <OutputPanel>
          <PanelHead $right={0}>
            <Grip /><PanelTitle>Output</PanelTitle><HeadTools />
          </PanelHead>
          <OutputCombo $h={32}>
            <select aria-label="Output view" defaultValue="Action Output"><option>Action Output</option></select>
            <i><Down /></i>
          </OutputCombo>
          <OutputList>Action</OutputList>
        </OutputPanel>
      </Workspace>
      <StatusBar>
        <Pane />
        <Pane $w={57}>100%</Pane>
        <Pane $w={197}><ModeIcon><NotesIcon /></ModeIcon>Design Mode</Pane>
      </StatusBar>
    </Window>
  );
}
